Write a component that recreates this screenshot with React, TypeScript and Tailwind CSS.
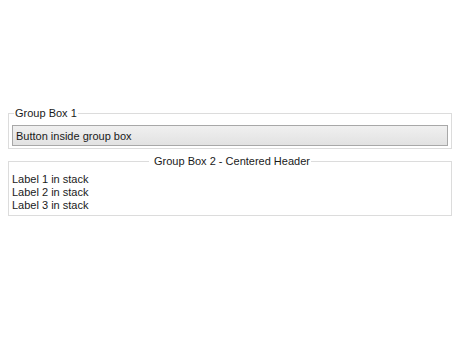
export default function App() {
  return (
    <div className="w-[460px] h-[360px] bg-white px-2 pt-[107px] text-[11px] leading-[13px] text-[#1a1a1a] font-['Liberation_Sans',Arial,sans-serif]">
      <fieldset className="border border-[#dcdcdc] px-[3px] pt-[5px] pb-[2px]">
        <legend className="ml-[2px] px-px">Group Box 1</legend>
        <button className="w-full h-[21px] text-left px-[3px] pt-px border border-[#a8a8a8] bg-gradient-to-b from-[#f0f0f0] to-[#e2e2e2]">
          Button inside group box
        </button>
      </fieldset>
      <fieldset className="mt-[6px] border border-[#dcdcdc] px-[3px] pt-[5px] pb-[3px]">
        <legend className="mx-auto pl-[5px] pr-px">Group Box 2 - Centered Header</legend>
        <div className="flex flex-col">
          <span>Label 1 in stack</span>
          <span>Label 2 in stack</span>
          <span>Label 3 in stack</span>
        </div>
      </fieldset>
    </div>
  );
}
